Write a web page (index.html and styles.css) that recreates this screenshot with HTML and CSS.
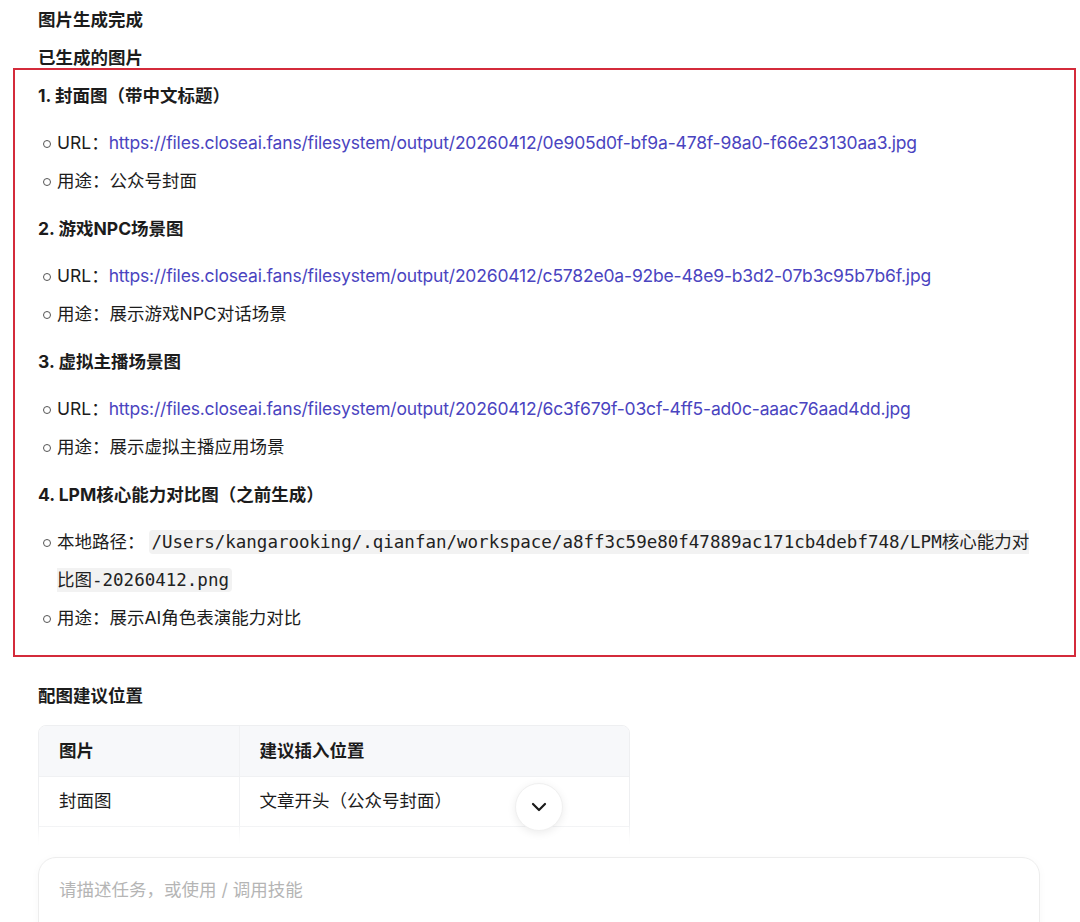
FILE: index.html
```html
<!DOCTYPE html>
<html lang="zh-CN">
<head>
<meta charset="utf-8">
<title>图片生成完成</title>
<link rel="stylesheet" href="styles.css">
</head>
<body>
<div class="app">
  <main class="scroll">
    <div class="content">
      <p class="title">图片生成完成</p>
      <h2 class="section">已生成的图片</h2>
      <section class="highlight">
        <h3 class="item-title">1. 封面图（带中文标题）</h3>
        <ul class="bullets">
          <li>URL：<a class="link" href="#">https://files.closeai.fans/filesystem/output/20260412/0e905d0f-bf9a-478f-98a0-f66e23130aa3.jpg</a></li>
          <li>用途：公众号封面</li>
        </ul>
        <h3 class="item-title">2. 游戏NPC场景图</h3>
        <ul class="bullets">
          <li>URL：<a class="link" href="#">https://files.closeai.fans/filesystem/output/20260412/c5782e0a-92be-48e9-b3d2-07b3c95b7b6f.jpg</a></li>
          <li>用途：展示游戏NPC对话场景</li>
        </ul>
        <h3 class="item-title">3. 虚拟主播场景图</h3>
        <ul class="bullets">
          <li>URL：<a class="link" href="#">https://files.closeai.fans/filesystem/output/20260412/6c3f679f-03cf-4ff5-ad0c-aaac76aad4dd.jpg</a></li>
          <li>用途：展示虚拟主播应用场景</li>
        </ul>
        <h3 class="item-title">4. LPM核心能力对比图（之前生成）</h3>
        <ul class="bullets">
          <li>本地路径：<code class="code">/Users/kangarooking/.qianfan/workspace/a8ff3c59e80f47889ac171cb4debf748/LPM核心能力对比图-20260412.png</code></li>
          <li>用途：展示AI角色表演能力对比</li>
        </ul>
      </section>
      <h2 class="section section-gap">配图建议位置</h2>
      <div class="table-wrap">
        <table class="table">
          <thead>
            <tr><th class="col1">图片</th><th>建议插入位置</th></tr>
          </thead>
          <tbody>
            <tr><td class="col1">封面图</td><td>文章开头（公众号封面）</td></tr>
            <tr class="row-hidden"><td class="col1"></td><td></td></tr>
          </tbody>
        </table>
      </div>
    </div>
    <button class="scroll-down" type="button" aria-label="滚动到底部">
      <svg width="22" height="22" viewBox="0 0 22 22" fill="none"><path d="M5 8 L11 14 L17 8" stroke="#1a1a1a" stroke-width="2.2" stroke-linecap="round" stroke-linejoin="round"/></svg>
    </button>
  </main>
  <footer class="composer">
    <div class="input-box">
      <div class="placeholder">请描述任务，或使用 / 调用技能</div>
    </div>
  </footer>
</div>
</body>
</html>
```

FILE: styles.css
```css
* { box-sizing: border-box; }
html, body { margin: 0; padding: 0; background: #fff; }
body {
  font-family: "Inter", "Noto Sans CJK SC", sans-serif;
  font-size: 17.5px;
  color: #1c1c1c;
  overflow: hidden;
}
.app {
  width: 1080px;
  height: 922px;
  display: flex;
  flex-direction: column;
}
.scroll {
  position: relative;
  height: 845px;
  flex: none;
  overflow: hidden;
}
.scroll::after {
  content: "";
  position: absolute;
  left: 0; right: 0; bottom: 0;
  height: 22px;
  background: linear-gradient(rgba(255,255,255,0), rgba(255,255,255,0.85) 70%, #fff);
  pointer-events: none;
}
.content {
  padding: 6px 4px 0 13px;
}
.title {
  margin: 0 0 14px 25px;
  font-size: 17.5px;
  font-weight: 700;
  line-height: 28px;
}
.section {
  margin: 0 0 0 25px;
  font-size: 17.5px;
  font-weight: 700;
  line-height: 20px;
}
.section-gap {
  margin-top: 25px;
  line-height: 28px;
}
.highlight {
  border: 2px solid #d42b3b;
  padding: 12px 30px 18px 23px;
}
.item-title {
  margin: 15px 0 0;
  font-size: 17.5px;
  font-weight: 700;
  line-height: 28px;
}
.item-title:first-child { margin-top: 0; }
.bullets {
  list-style: none;
  margin: 14px 0 0;
  padding: 0 0 0 19px;
}
.bullets li {
  position: relative;
  line-height: 38px;
}
.bullets li::before {
  content: "";
  position: absolute;
  left: -14px;
  top: 16px;
  width: 6px;
  height: 6px;
  border: 1px solid #555;
  border-radius: 50%;
}
.link {
  color: #4a44c0;
  text-decoration: none;
  letter-spacing: -0.18px;
}
.code {
  font-family: "DejaVu Sans Mono", "Noto Sans CJK SC", monospace;
  font-size: 17.5px;
  background: #f2f2f2;
  border-radius: 4px;
  padding: 2px 3px;
  margin-left: 4px;
  color: #222;
}
.table-wrap {
  margin: 15px 0 0 25px;
  width: 592px;
  border: 1px solid #eeeff1;
  border-radius: 8px;
  overflow: hidden;
}
.table {
  width: 100%;
  border-collapse: collapse;
}
.table th, .table td {
  text-align: left;
  padding: 0 20px;
  height: 50px;
  font-size: 17.5px;
  line-height: 24px;
  border-bottom: 1px solid #f0f1f3;
}
.table th {
  background: #f7f8fa;
  font-weight: 700;
}
.table td { font-weight: 400; }
.table .col1 {
  width: 200px;
  border-right: 1px solid #f0f1f3;
}
.scroll-down {
  position: absolute;
  left: 515px;
  top: 783px;
  width: 48px;
  height: 48px;
  border-radius: 50%;
  border: 1px solid #f0f0f0;
  background: #fff;
  box-shadow: 0 2px 8px rgba(0,0,0,0.08);
  display: flex;
  align-items: center;
  justify-content: center;
  padding: 0;
  z-index: 2;
}
.composer {
  padding: 12px 40px 0 38px;
}
.input-box {
  height: 120px;
  border: 1px solid #ededed;
  border-radius: 18px;
  box-shadow: 0 2px 10px rgba(0,0,0,0.03);
  padding: 19px 20px;
}
.placeholder {
  font-size: 17.5px;
  line-height: 26px;
  color: #b5b5b5;
}
```
